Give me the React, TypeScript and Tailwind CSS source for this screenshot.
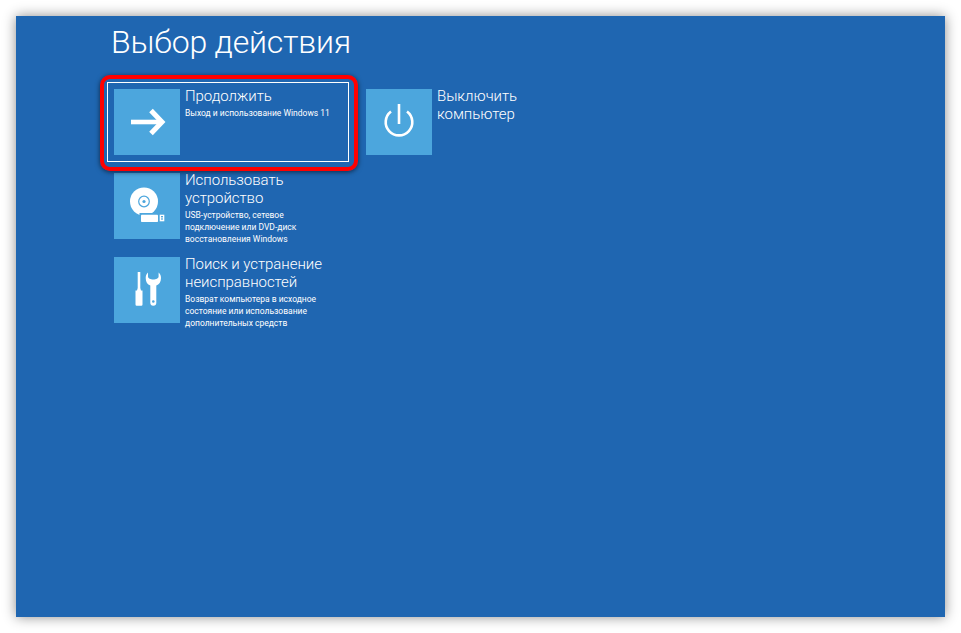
import { ReactNode } from 'react';

const font = { fontFamily: 'Roboto, "Open Sans", sans-serif' };

const ArrowIcon = () => (
  <svg width="66" height="66" viewBox="0 0 66 66" fill="none">
    <path d="M17 33H46" stroke="#fff" strokeWidth="4.6" />
    <path d="M37 21.5L48 33L37 44.5" stroke="#fff" strokeWidth="5" />
  </svg>
);

const PowerIcon = () => (
  <svg width="66" height="66" viewBox="0 0 66 66" fill="none">
    <path d="M33 15V35" stroke="#fff" strokeWidth="2.6" />
    <path d="M25 22.5A13.3 13.3 0 1 0 41 22.5" stroke="#fff" strokeWidth="2.6" />
  </svg>
);

const DiscIcon = () => (
  <svg width="66" height="66" viewBox="0 0 66 66" fill="none">
    <circle cx="30" cy="28.5" r="14" fill="#fff" />
    <circle cx="30" cy="28.5" r="5.3" fill="none" stroke="#4ca6dd" strokeWidth="1.2" />
    <circle cx="30" cy="28.5" r="1.6" fill="#4ca6dd" />
    <rect x="25.5" y="40" width="26" height="10.5" fill="#4ca6dd" />
    <rect x="27" y="41.7" width="17" height="7.3" rx="0.8" fill="#fff" />
    <rect x="45.7" y="41.7" width="4.6" height="6.6" fill="#fff" />
    <rect x="47" y="43" width="2" height="1.4" fill="#4ca6dd" />
    <rect x="47" y="45.4" width="2" height="1.2" fill="#4ca6dd" />
  </svg>
);

const ToolsIcon = () => (
  <svg width="66" height="66" viewBox="0 0 66 66" fill="none">
    <path d="M23.7 15H26.3V31L27 33.5H28.5V47.5Q28.5 48.7 27.3 48.7H22.7Q21.5 48.7 21.5 47.5V33.5H23L23.7 31Z" fill="#fff" />
    <path
      d="M34 15.5C32.3 17 31.7 19 31.7 21C31.7 25 33.5 27.5 36.3 28.5V45.7A3 3 0 0 0 42.3 45.7V28.5C45 27.5 47 25 47 21C47 19 46.4 17 44.6 15.5V19.5C44.6 21.5 42 22.5 39.3 22.5C36.6 22.5 34 21.5 34 19.5Z"
      fill="#fff"
    />
    <circle cx="39.3" cy="44.5" r="1.3" fill="#4ca6dd" />
  </svg>
);

type TOption = {
  icon: ReactNode;
  title: ReactNode;
  desc?: ReactNode;
  focused?: boolean;
};

const Option = ({ icon, title, desc, focused }: TOption) => (
  <div className={`flex h-20 w-[242px] gap-[5px] border p-[6px] ${focused ? 'border-white' : 'border-transparent'}`}>
    <div className="size-[66px] shrink-0 bg-[#4ca6dd]">{icon}</div>
    <div className="min-w-0 text-white">
      <div className="-mt-[2px] text-[15px] leading-[18px] tracking-[-0.05px] whitespace-nowrap font-light">{title}</div>
      {desc ? <div className="mt-[2px] text-[8.5px] leading-[12px] whitespace-nowrap">{desc}</div> : null}
    </div>
  </div>
);

export default function App() {
  return (
    <div className="h-[633px] w-[961px] overflow-hidden bg-white p-4" style={font}>
      <div className="relative h-[601px] w-[929px] bg-[#1f66b1] pl-[91px] shadow-[0_0_12px_rgba(0,0,0,0.45)]">
        <h1 className="pl-1 pt-[4px] text-[32px] leading-[44px] tracking-[-0.2px] font-light text-white">Выбор действия</h1>
        <div className="mt-[18px] flex gap-[10px]">
          <div className="flex flex-col gap-1">
            <Option
              focused
              icon={<ArrowIcon />}
              title="Продолжить"
              desc="Выход и использование Windows 11"
            />
            <Option
              icon={<DiscIcon />}
              title={<>Использовать<br />устройство</>}
              desc={<>USB-устройство, сетевое<br />подключение или DVD-диск<br />восстановления Windows</>}
            />
            <Option
              icon={<ToolsIcon />}
              title={<>Поиск и устранение<br />неисправностей</>}
              desc={<>Возврат компьютера в исходное<br />состояние или использование<br />дополнительных средств</>}
            />
          </div>
          <Option icon={<PowerIcon />} title={<>Выключить<br />компьютер</>} />
        </div>
        {/* red highlight */}
        <div className="absolute top-[59px] left-[84px] h-[96px] w-[258px] rounded-[10px] border-[4px] border-[#ff0000] shadow-[0_1px_5px_rgba(0,0,0,0.6)]" />
      </div>
    </div>
  );
}
